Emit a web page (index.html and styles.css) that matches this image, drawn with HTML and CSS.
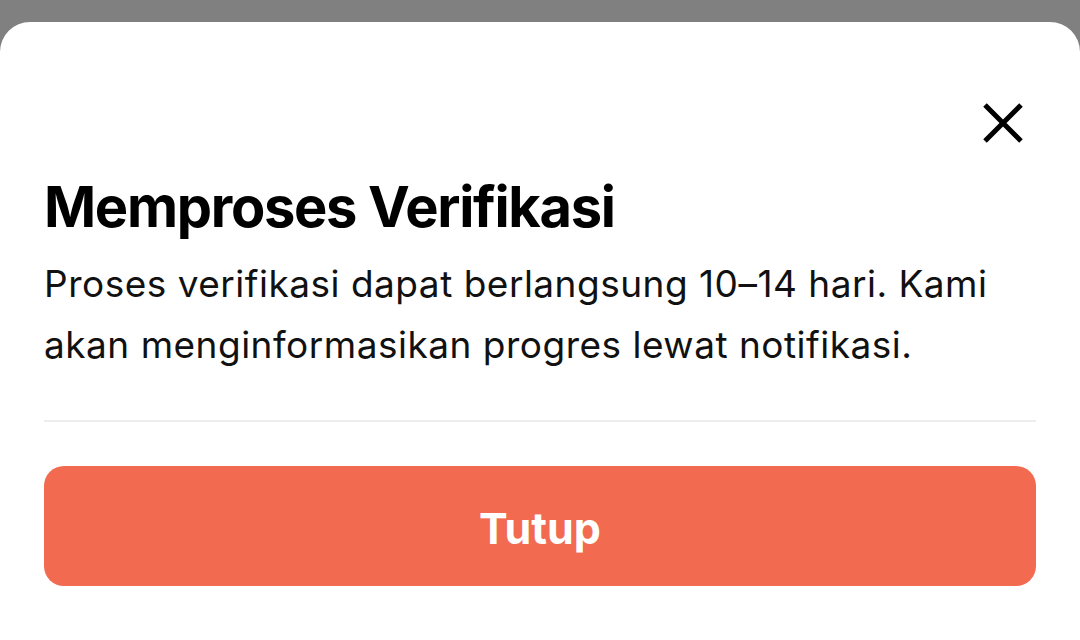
FILE: index.html
```html
<!DOCTYPE html>
<html lang="id">
<head>
<meta charset="utf-8">
<title>Memproses Verifikasi</title>
<link rel="stylesheet" href="styles.css">
</head>
<body>
<div class="sheet">
  <div class="sheet-head">
    <button class="close" aria-label="Tutup">
      <svg width="44" height="44" viewBox="0 0 44 44"><path d="M4 4 L40 40 M40 4 L4 40" stroke="#000" stroke-width="5" stroke-linecap="butt" fill="none"/></svg>
    </button>
  </div>
  <h1 class="title">Memproses Verifikasi</h1>
  <p class="desc">Proses verifikasi dapat berlangsung 10&#8211;14 hari. Kami akan menginformasikan progres lewat notifikasi.</p>
  <hr class="divider">
  <button class="primary">Tutup</button>
</div>
</body>
</html>
```

FILE: styles.css
```css
html, body {
  margin: 0;
  padding: 0;
  background: #808080;
  height: 100%;
  overflow: hidden;
}
body {
  font-family: Inter, "Noto Sans", sans-serif;
  color: #000;
}
.sheet {
  margin-top: 22px;
  background: #fff;
  border-radius: 30px 30px 0 0;
  height: 618px;
  padding: 0 44px;
  box-sizing: border-box;
  display: flex;
  flex-direction: column;
}
.sheet-head {
  display: flex;
  justify-content: flex-end;
  padding-top: 79px;
  margin-right: 11px;
}
.close {
  border: 0;
  background: none;
  padding: 0;
  width: 44px;
  height: 44px;
  display: block;
}
.close svg { display: block; }
.title {
  margin: 32px 0 0;
  font-size: 56px;
  font-weight: 700;
  letter-spacing: -1.3px;
  line-height: 60px;
}
.desc {
  margin: 16px 0 0;
  font-size: 37px;
  font-weight: 400;
  letter-spacing: 0.5px;
  line-height: 61px;
  color: #111;
}
.divider {
  margin: 45px 0 0;
  border: 0;
  border-top: 2px solid #ededed;
  height: 0;
}
.primary {
  margin-top: 44px;
  height: 120px;
  width: 100%;
  border: 0;
  border-radius: 20px;
  background: #f26a50;
  color: #fff;
  font-family: Inter, "Noto Sans", sans-serif;
  font-size: 43px;
  font-weight: 700;
  letter-spacing: 0;
  padding-top: 4px;
}
```
